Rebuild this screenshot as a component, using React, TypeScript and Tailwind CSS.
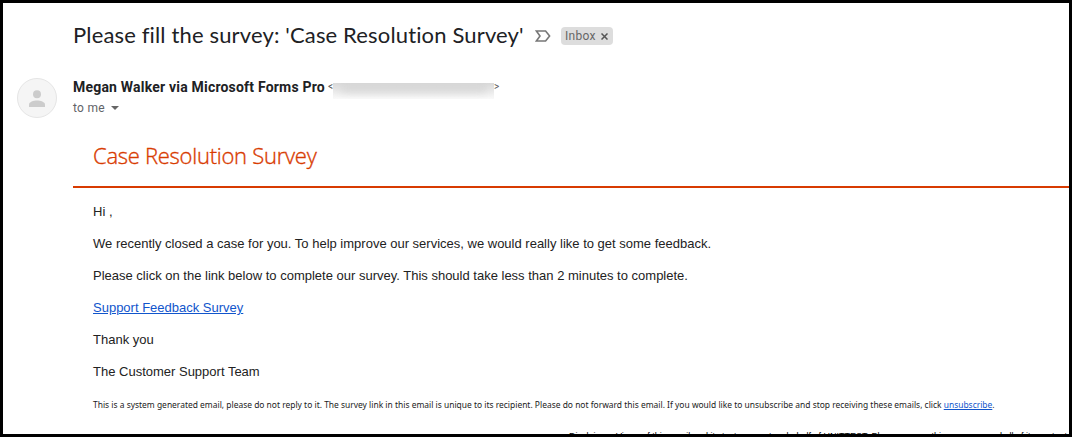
const body = [
  { text: "Hi ,", cls: "" },
  { text: "We recently closed a case for you. To help improve our services, we would really like to get some feedback.", cls: "" },
  { text: "Please click on the link below to complete our survey. This should take less than 2 minutes to complete.", cls: "" },
  { text: "Support Feedback Survey", cls: "text-[#1155cc] underline" },
  { text: "Thank you", cls: "" },
  { text: "The Customer Support Team", cls: "" },
];

function Subject() {
  return (
    <header className="flex h-[66px] items-center pl-[70px]">
      <h1 className="w-[450px] whitespace-nowrap pb-0.5 font-['Lato',sans-serif] text-[22px] leading-7 tracking-[0.15px] text-[#202124]">
        Please fill the survey: 'Case Resolution Survey'
      </h1>
      <svg className="ml-3 h-3 w-4 shrink-0" viewBox="0 0 16 12" fill="none" stroke="#777" strokeWidth="1.6">
        <path d="M1.4 1h9.2l4 5-4 5H1.4l3.6-5z" />
      </svg>
      <span className="ml-2.5 flex h-[18px] w-[52px] items-center justify-between rounded bg-[#ddd] pl-1 pr-[5px] font-['Roboto',sans-serif] text-xs tracking-[0.3px] text-[#666]">
        Inbox
        <svg className="mt-px size-[7px]" viewBox="0 0 7 7" stroke="#555" strokeWidth="1.5">
          <path d="M.5.5l6 6M6.5.5l-6 6" />
        </svg>
      </span>
    </header>
  );
}

function Sender() {
  return (
    <section className="flex pl-3.5 pt-[9px]">
      <div className="flex size-10 shrink-0 items-center justify-center rounded-full border border-[#e5e5e5] bg-[#f5f5f5]">
        <svg className="h-[17px] w-4" viewBox="0 0 16 17" fill="#ccc">
          <circle cx="8" cy="4.2" r="4" />
          <path d="M0 17v-2.5C0 12 4.5 10.5 8 10.5s8 1.5 8 4V17z" />
        </svg>
      </div>
      <div className="ml-4 font-['Roboto',sans-serif]">
        <div className="flex h-5 items-center whitespace-nowrap pb-0.5 text-sm font-bold text-[#202124]">
          <span className="w-[252px] tracking-[0.2px]">Megan Walker via Microsoft Forms Pro</span>
          <span className="ml-[3px] mt-px w-[5px] text-[10px] font-normal text-[#555]">&lt;</span>
          <span className="mt-[7px] flex h-4 w-[161px] overflow-hidden bg-linear-to-b from-[#dadada] to-[#fafafa]">
            <span className="ml-2 mt-0.5 h-1.5 w-[145px] bg-[#d0d0d0] blur-[4px]" />
          </span>
          <span className="mt-px text-[10px] font-normal text-[#555]">&gt;</span>
        </div>
        <div className="flex h-5 items-center text-xs tracking-[0.3px] text-[#5f6368]">
          to me
          <svg className="ml-1.5 h-1 w-2" viewBox="0 0 8 4" fill="#666">
            <path d="M0 0h8L4 4z" />
          </svg>
        </div>
      </div>
    </section>
  );
}

export default function App() {
  return (
    <main className="h-[437px] w-[1072px] overflow-hidden border-[3px] border-black bg-white">
      <Subject />
      <Sender />
      <article className="ml-[70px]">
        <h2 className="flex h-[70px] items-center border-b-2 border-[#d83b01] pl-5 pt-[7px] font-['Open_Sans',sans-serif] text-[22px] font-light tracking-[-0.27px] text-[#d83b01] [-webkit-text-stroke:0.35px_#d83b01]">
          Case Resolution Survey
        </h2>
        <div className="pl-5 pt-3.5">
          {body.map((line) => (
            <p key={line.text} className="mb-3 h-5 whitespace-nowrap font-['Liberation_Sans',Arial,sans-serif] text-[13px] leading-5 text-[#222]">
              <span className={line.cls}>{line.text}</span>
            </p>
          ))}
          <p className="mt-[15px] whitespace-nowrap font-['Noto_Sans',sans-serif] text-[8.45px] leading-4 text-[#222]">
            <span>This is a system generated email, please do not reply to it. The survey link in this email is unique to its recipient. Please do not forward this email. If you would like to unsubscribe and stop receiving these emails, click </span>
            <a className="text-[#1155cc] underline">unsubscribe</a>.
          </p>
          <p className="mt-[15px] whitespace-nowrap pl-[476px] font-['Liberation_Sans',Arial,sans-serif] text-[9px] leading-4 text-black">
            Disclaimer: Views of this email and its text are sent on behalf of UNITTEST. Please ensure this message and all of its content are read.
          </p>
        </div>
      </article>
    </main>
  );
}
